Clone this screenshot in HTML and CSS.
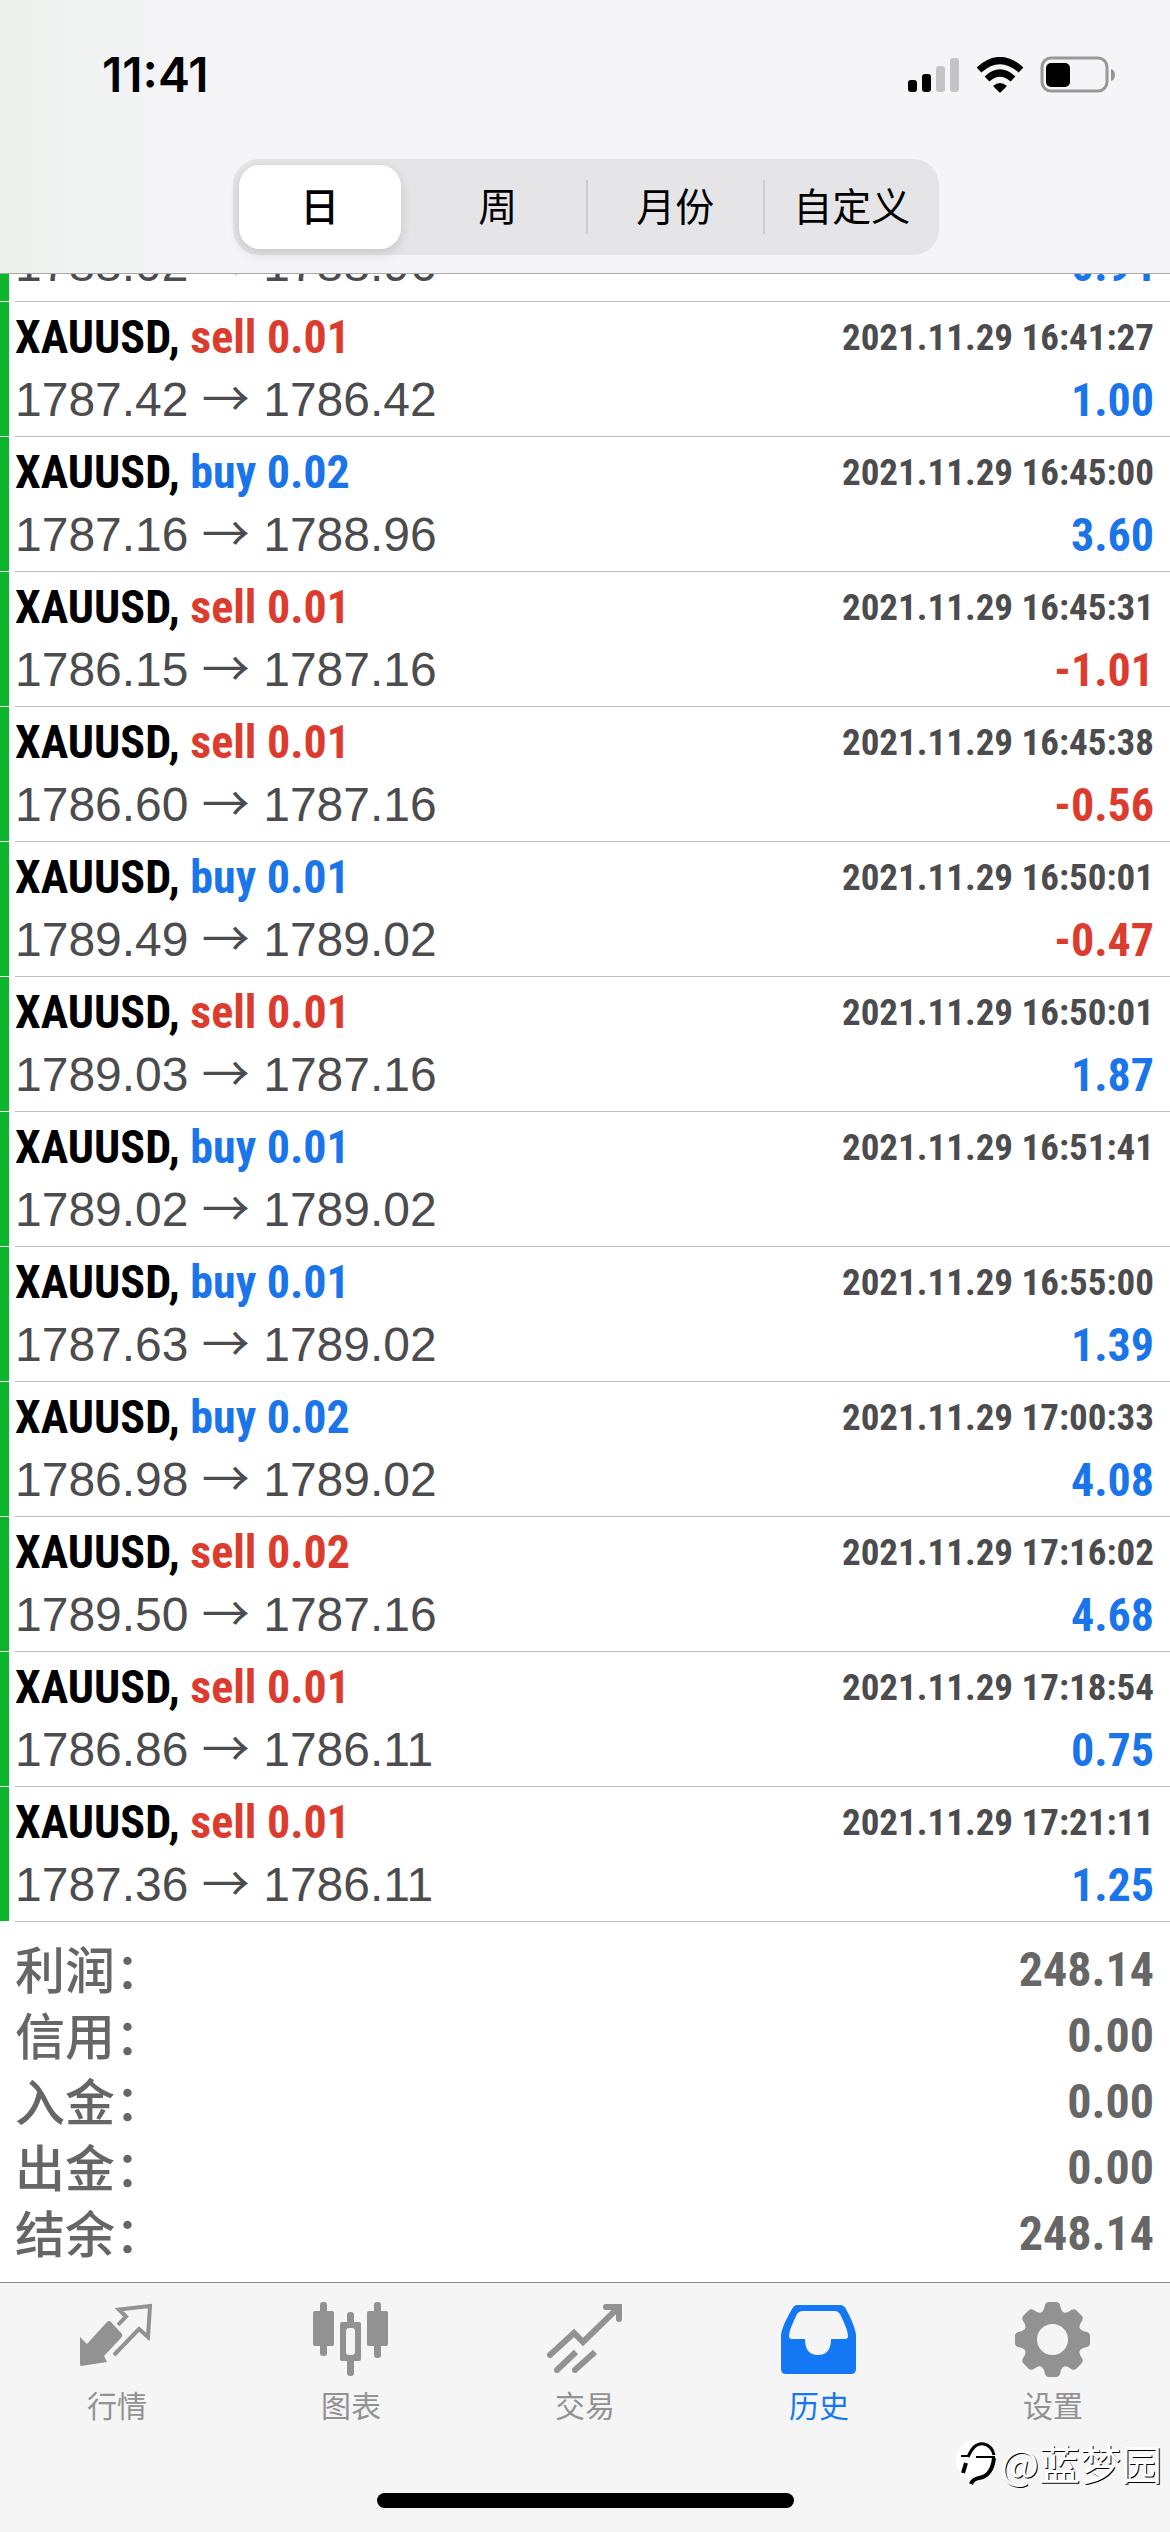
FILE: index.html
```html
<!DOCTYPE html>
<html lang="zh-CN">
<head>
<meta charset="utf-8">
<meta name="viewport" content="width=device-width">
<title>历史</title>
<link rel="stylesheet" href="styles.css">
</head>
<body>
<header class="header">
  <div class="status">
    <time class="clock">11:41</time>
    <div class="status-icons">
      <svg width="52" height="36" viewBox="0 0 52 36"><rect x="0" y="23" width="9" height="12" rx="3"/><rect x="14" y="17" width="9" height="18" rx="3"/><g fill="#c4c4c6"><rect x="28" y="9" width="9" height="26" rx="3"/><rect x="42" y="1" width="9" height="34" rx="3"/></g></svg>
      <svg width="50" height="36" viewBox="0 0 50 36"><g fill="none" stroke="#000" stroke-width="7"><path d="M4 13 Q25 -6 46 13"/><path d="M12 22 Q25 10 38 22"/></g><path d="M18 29 Q25 23 32 29 L26 35 Q25 36 24 35Z"/></svg>
      <svg width="76" height="38" viewBox="0 0 76 38"><rect x="2" y="2" width="65" height="33" rx="9" fill="none" stroke="#98989a" stroke-width="3"/><rect x="6" y="7" width="24" height="24" rx="5"/><path d="M71 13 Q75 14 75 19 Q75 24 71 25Z" fill="#98989a"/></svg>
    </div>
  </div>
  <div class="segments">
    <button class="segment segment-on" type="button">日</button>
    <button class="segment" type="button">周</button>
    <button class="segment segment-line" type="button">月份</button>
    <button class="segment segment-line" type="button">自定义</button>
  </div>
</header>
<main class="main">
  <ul class="deals">
    <li class="deal deal-cut"><span class="bar"></span><div class="body"><div class="line"><span class="prices">1788.02 <span class="arrow">→</span> 1788.96</span><span class="amount up">0.94</span></div></div></li>
    <li class="deal"><span class="bar"></span><div class="body"><div class="line head"><span class="symbol">XAUUSD, <span class="down">sell 0.01</span></span><time class="date">2021.11.29 16:41:27</time></div><div class="line"><span class="prices">1787.42 <span class="arrow">→</span> 1786.42</span><span class="amount up">1.00</span></div></div></li>
    <li class="deal"><span class="bar"></span><div class="body"><div class="line head"><span class="symbol">XAUUSD, <span class="up">buy 0.02</span></span><time class="date">2021.11.29 16:45:00</time></div><div class="line"><span class="prices">1787.16 <span class="arrow">→</span> 1788.96</span><span class="amount up">3.60</span></div></div></li>
    <li class="deal"><span class="bar"></span><div class="body"><div class="line head"><span class="symbol">XAUUSD, <span class="down">sell 0.01</span></span><time class="date">2021.11.29 16:45:31</time></div><div class="line"><span class="prices">1786.15 <span class="arrow">→</span> 1787.16</span><span class="amount down">-1.01</span></div></div></li>
    <li class="deal"><span class="bar"></span><div class="body"><div class="line head"><span class="symbol">XAUUSD, <span class="down">sell 0.01</span></span><time class="date">2021.11.29 16:45:38</time></div><div class="line"><span class="prices">1786.60 <span class="arrow">→</span> 1787.16</span><span class="amount down">-0.56</span></div></div></li>
    <li class="deal"><span class="bar"></span><div class="body"><div class="line head"><span class="symbol">XAUUSD, <span class="up">buy 0.01</span></span><time class="date">2021.11.29 16:50:01</time></div><div class="line"><span class="prices">1789.49 <span class="arrow">→</span> 1789.02</span><span class="amount down">-0.47</span></div></div></li>
    <li class="deal"><span class="bar"></span><div class="body"><div class="line head"><span class="symbol">XAUUSD, <span class="down">sell 0.01</span></span><time class="date">2021.11.29 16:50:01</time></div><div class="line"><span class="prices">1789.03 <span class="arrow">→</span> 1787.16</span><span class="amount up">1.87</span></div></div></li>
    <li class="deal"><span class="bar"></span><div class="body"><div class="line head"><span class="symbol">XAUUSD, <span class="up">buy 0.01</span></span><time class="date">2021.11.29 16:51:41</time></div><div class="line"><span class="prices">1789.02 <span class="arrow">→</span> 1789.02</span></div></div></li>
    <li class="deal"><span class="bar"></span><div class="body"><div class="line head"><span class="symbol">XAUUSD, <span class="up">buy 0.01</span></span><time class="date">2021.11.29 16:55:00</time></div><div class="line"><span class="prices">1787.63 <span class="arrow">→</span> 1789.02</span><span class="amount up">1.39</span></div></div></li>
    <li class="deal"><span class="bar"></span><div class="body"><div class="line head"><span class="symbol">XAUUSD, <span class="up">buy 0.02</span></span><time class="date">2021.11.29 17:00:33</time></div><div class="line"><span class="prices">1786.98 <span class="arrow">→</span> 1789.02</span><span class="amount up">4.08</span></div></div></li>
    <li class="deal"><span class="bar"></span><div class="body"><div class="line head"><span class="symbol">XAUUSD, <span class="down">sell 0.02</span></span><time class="date">2021.11.29 17:16:02</time></div><div class="line"><span class="prices">1789.50 <span class="arrow">→</span> 1787.16</span><span class="amount up">4.68</span></div></div></li>
    <li class="deal"><span class="bar"></span><div class="body"><div class="line head"><span class="symbol">XAUUSD, <span class="down">sell 0.01</span></span><time class="date">2021.11.29 17:18:54</time></div><div class="line"><span class="prices">1786.86 <span class="arrow">→</span> 1786.11</span><span class="amount up">0.75</span></div></div></li>
    <li class="deal"><span class="bar"></span><div class="body"><div class="line head"><span class="symbol">XAUUSD, <span class="down">sell 0.01</span></span><time class="date">2021.11.29 17:21:11</time></div><div class="line"><span class="prices">1787.36 <span class="arrow">→</span> 1786.11</span><span class="amount up">1.25</span></div></div></li>
  </ul>
  <dl class="summary">
    <div class="total"><dt>利润：</dt><dd>248.14</dd></div>
    <div class="total"><dt>信用：</dt><dd>0.00</dd></div>
    <div class="total"><dt>入金：</dt><dd>0.00</dd></div>
    <div class="total"><dt>出金：</dt><dd>0.00</dd></div>
    <div class="total"><dt>结余：</dt><dd>248.14</dd></div>
  </dl>
</main>
<footer class="footer">
  <nav class="tabs">
    <a class="tab" href="#quotes">
      <svg width="76" height="76" viewBox="0 0 76 76"><path fill="currentColor" d="M1 35 L8 42 L28 20 Q30 18 32 20 L43 32 Q44 34 42 36 L25 54 L28 60 L2 64 Q1 64 1 62Z"/><path fill="none" stroke="currentColor" stroke-width="4" d="M39 23 L47 14.500 L40 7.500 L71 4 L69 35 L60 27 L35 53"/></svg>
      <span>行情</span></a>
    <a class="tab" href="#charts">
      <svg width="76" height="76" viewBox="0 0 76 76"><g fill="currentColor"><rect x="0" y="9" width="21" height="35" rx="2"/><rect x="7" y="0" width="7" height="54" rx="3"/><rect x="54" y="9" width="21" height="35" rx="2"/><rect x="61" y="0" width="7" height="56" rx="3"/><rect x="27" y="20" width="21" height="39" rx="2"/><rect x="34" y="10" width="7" height="64" rx="3"/></g><rect x="33" y="26" width="9" height="27" rx="3" fill="#f5f5f5"/></svg>
      <span>图表</span></a>
    <a class="tab" href="#trade">
      <svg width="76" height="76" viewBox="0 0 76 76"><g fill="none" stroke="currentColor" stroke-width="6"><path stroke-linecap="round" d="M3 53 L27 31 L36 40 L70 7"/><path stroke-linecap="round" stroke-linejoin="miter" d="M59 5 H72 V17"/><path d="M11 67 L29 50"/><path d="M29 67 L48 50"/></g><g fill="currentColor"><path d="M60 2 H75 V16Z"/><circle cx="10" cy="68" r="3"/><circle cx="28" cy="68" r="3"/></g></svg>
      <span>交易</span></a>
    <a class="tab tab-on" href="#history" aria-current="page">
      <svg width="76" height="76" viewBox="0 0 76 76"><path fill="currentColor" fill-rule="evenodd" d="M16 3 H59 Q63 3 65 7 Q75 26 75 34 V67 Q75 72 70 72 H5 Q0 72 0 67 V34 Q0 26 11 7 Q13 3 16 3Z M22 9 Q18 9 16 12 Q8 28 8 34 Q8 37 11 37 H24 Q24 53 37 53 Q50 53 50 37 H64 Q67 37 67 34 Q67 28 59 12 Q57 9 54 9Z"/></svg>
      <span>历史</span></a>
    <a class="tab" href="#settings">
      <svg width="76" height="76" viewBox="0 0 76 76"><defs><path id="tooth" d="M24 12 Q28 10 29 7 L30 3 Q31 0 34 0 H41 Q44 0 45 3 L46 7 Q47 10 51 12 L50 20 H25Z"/></defs><g fill="currentColor"><use href="#tooth"/><use href="#tooth" transform="rotate(45 37.500 37.500)"/><use href="#tooth" transform="rotate(90 37.500 37.500)"/><use href="#tooth" transform="rotate(135 37.500 37.500)"/><use href="#tooth" transform="rotate(180 37.500 37.500)"/><use href="#tooth" transform="rotate(225 37.500 37.500)"/><use href="#tooth" transform="rotate(270 37.500 37.500)"/><use href="#tooth" transform="rotate(315 37.500 37.500)"/></g><circle cx="37.500" cy="37.500" r="22" fill="none" stroke="currentColor" stroke-width="13"/></svg>
      <span>设置</span></a>
  </nav>
  <div class="home"></div>
  <div class="watermark">
    <svg width="44" height="48" viewBox="0 0 44 48"><circle cx="20" cy="22" r="20" fill="#fff"/><g fill="none" stroke="#000"><path stroke-width="2" d="M5 18 H12 M20 19 H39"/><path stroke-width="3" d="M12 19 Q18 4 28 6 Q36 8 38 17"/><path stroke-width="4" d="M10 25 L7 35 M38 20 Q36 38 23 40 Q17 41 15 46"/></g></svg>
    <span>@蓝梦园</span>
  </div>
</footer>
</body>
</html>
```
FILE: styles.css
```css
* { box-sizing: border-box; }

body {
  margin: 0;
  min-height: 100vh;
  display: flex;
  flex-direction: column;
  background: #fff;
  color: #000;
  font-family: "Liberation Sans", "Noto Sans CJK SC", sans-serif;
}

ul, dl, dd { margin: 0; padding: 0; list-style: none; }
svg { display: block; }

.header {
  display: flex;
  flex-direction: column;
  align-items: center;
  gap: 54px;
  padding: 45px 54px 18px 102px;
  border-bottom: 1px solid #a9a9ab;
  background: linear-gradient(90deg, #ecefea 0, #f1f2f2 70px, #f5f5f7 220px, #f5f5f7 100%);
}

.status {
  width: 100%;
  height: 60px;
  display: flex;
  align-items: center;
  justify-content: space-between;
}

.clock { font: 600 48px/60px Inter, sans-serif; }
.status-icons { display: flex; align-items: center; gap: 15px; }

.segments {
  width: 706px;
  max-width: 100%;
  height: 96px;
  display: grid;
  grid-template-columns: repeat(4, 1fr);
  align-items: center;
  margin-right: 46px;
  border-radius: 26px;
  background: #e5e5e7;
}

.segment {
  height: 54px;
  padding: 0 0 6px;
  border: 0;
  background: none;
  color: #000;
  font: 400 39px/48px "Noto Sans CJK SC", sans-serif;
}

.segment-on {
  height: 84px;
  margin: 0 9px 0 6px;
  border-radius: 21px;
  background: #fff;
  font-weight: 500;
  box-shadow: 0 4px 12px rgba(0, 0, 0, .14);
}

.segment-line { border-left: 2px solid #cdcdd0; }

.main { flex: 1; }
.deal { display: flex; gap: 6px; }
.bar { width: 9px; margin-bottom: 1px; background: #0cb52b; }

.body {
  flex: 1;
  padding: 5px 16px 4px 0;
  border-bottom: 1px solid #bfbfc1;
}

.deal-cut { height: 28px; overflow: hidden; }
.deal-cut .body {
  display: flex;
  flex-direction: column;
  justify-content: flex-end;
  overflow: hidden;
}
.deal-cut .line { flex: none; }

.line {
  display: flex;
  justify-content: space-between;
  height: 64px;
  line-height: 64px;
  white-space: nowrap;
}

.head { height: 61px; line-height: 61px; }

.symbol, .date, .amount, .total dd {
  font-family: "Roboto Condensed", "Liberation Sans", sans-serif;
  font-weight: 700;
}

.symbol { font-size: 46px; }
.date { font-size: 37px; color: #4c4c4e; }
.prices { font-size: 48px; color: #4c4c4e; }
.arrow { font-family: "Noto Sans CJK SC", sans-serif; line-height: 1; }
.amount { font-size: 46px; }
.up { color: #1a75ea; }
.down { color: #dc3c2e; }

.summary { padding: 15px 16px 15px 15px; }

.total {
  display: flex;
  justify-content: space-between;
  height: 66px;
  line-height: 66px;
  color: #666;
}

.total dt {
  font: 500 50px/60px "Noto Sans CJK SC", sans-serif;
}

.total dd { font-size: 48px; }

.footer {
  position: relative;
  display: flex;
  flex-direction: column;
  align-items: center;
  height: 250px;
  border-top: 1px solid #8c8c8e;
  background: #f5f5f5;
}

.tabs {
  width: 100%;
  display: grid;
  grid-template-columns: repeat(5, 1fr);
  padding-top: 19px;
}

.tab {
  display: flex;
  flex-direction: column;
  align-items: center;
  gap: 6px;
  color: #929292;
  font: 400 30px/40px "Noto Sans CJK SC", sans-serif;
  text-decoration: none;
}

.tab-on { color: #1478f5; }

.home {
  width: 417px;
  height: 15px;
  margin-top: auto;
  margin-bottom: 24px;
  border-radius: 8px;
  background: #000;
}

.watermark {
  position: absolute;
  right: 8px;
  bottom: 40px;
  display: flex;
  align-items: center;
  color: #fff;
  font: 400 41px/60px "Noto Sans CJK SC", sans-serif;
  text-shadow: 1px 1px 0 #000;
}
```
